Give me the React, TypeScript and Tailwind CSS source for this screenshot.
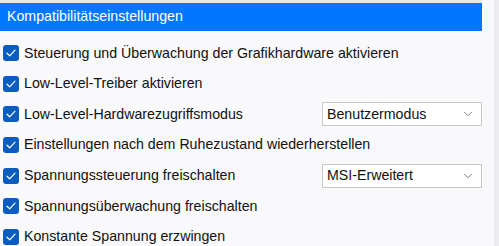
import { ChevronDown } from 'lucide-react'

const ROWS = [
  { label: 'Steuerung und Überwachung der Grafikhardware aktivieren' },
  { label: 'Low-Level-Treiber aktivieren' },
  { label: 'Low-Level-Hardwarezugriffsmodus', select: 'Benutzermodus' },
  { label: 'Einstellungen nach dem Ruhezustand wiederherstellen' },
  { label: 'Spannungssteuerung freischalten', select: 'MSI-Erweitert' },
  { label: 'Spannungsüberwachung freischalten' },
  { label: 'Konstante Spannung erzwingen' },
]

function Check() {
  return (
    <span className="w-[16px] h-[16px] rounded-[3px] bg-[#0b5cc0] flex items-center justify-center flex-shrink-0">
      <svg width="10" height="8" viewBox="0 0 10 8" fill="none">
        <path d="M1 4.2 L3.7 6.8 L9 1.2" stroke="white" strokeWidth="1.2" strokeLinecap="round" strokeLinejoin="round" />
      </svg>
    </span>
  )
}

export default function App() {
  return (
    <div
      className="w-[499px] h-[246px] overflow-hidden bg-[#f9f8fb] flex"
      style={{ fontFamily: '"Liberation Sans", Arial, sans-serif' }}
    >
      <div className="flex-1 flex flex-col">
        <div className="h-[3px] shrink-0 bg-[#e6e6ea] mr-[12px]" />
        <div className="h-[28px] shrink-0 bg-[#0077fe] mr-[12px] flex items-center pl-[7px] text-white text-[14.2px]">
          Kompatibilitätseinstellungen
        </div>
        <div className="flex flex-col shrink-0 pt-[7px] mr-[12px]">
          {ROWS.map(({ label, select }) => (
            <div key={label} className="h-[30.6px] shrink-0 flex items-center pl-[3px] text-[14.2px] text-[#111]">
              <Check />
              <span className="ml-[5px] flex-1 whitespace-nowrap">{label}</span>
              {select && (
                <div className="w-[160px] h-[24px] border border-[#c9c9cc] bg-white flex items-center pl-[4px] pr-[6px]">
                  <span className="flex-1">{select}</span>
                  <ChevronDown className="w-[14px] h-[14px] text-[#555]" strokeWidth={1.3} />
                </div>
              )}
            </div>
          ))}
        </div>
      </div>
      <div className="w-[5px] bg-[#ececef]" />
    </div>
  )
}
